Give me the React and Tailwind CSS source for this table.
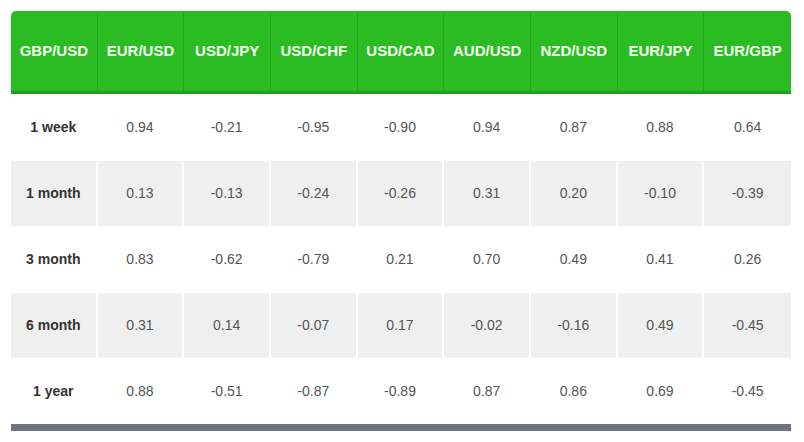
const pairs = ["GBP/USD", "EUR/USD", "USD/JPY", "USD/CHF", "USD/CAD", "AUD/USD", "NZD/USD", "EUR/JPY", "EUR/GBP"];

const rows = [
    { label: "1 week", values: ["0.94", "-0.21", "-0.95", "-0.90", "0.94", "0.87", "0.88", "0.64"] },
    { label: "1 month", values: ["0.13", "-0.13", "-0.24", "-0.26", "0.31", "0.20", "-0.10", "-0.39"] },
    { label: "3 month", values: ["0.83", "-0.62", "-0.79", "0.21", "0.70", "0.49", "0.41", "0.26"] },
    { label: "6 month", values: ["0.31", "0.14", "-0.07", "0.17", "-0.02", "-0.16", "0.49", "-0.45"] },
    { label: "1 year", values: ["0.88", "-0.51", "-0.87", "-0.89", "0.87", "0.86", "0.69", "-0.45"] },
];

const App = () => {
    return (
        <div className="w-[804px] h-[442px] bg-white pt-[11px] px-[11px] font-['Liberation_Sans',Arial,sans-serif]">
            <div className="w-[780px]">
                {/* Header */}
                <div className="grid grid-cols-9 h-[83px] bg-[#2bbc23] rounded-t-[5px] border-b-[3px] border-[#249d1e]">
                    {pairs.map((p, i) => (
                        <div
                            key={p}
                            className={`flex items-center justify-center text-[#f4fff2] font-bold text-[15px] pt-[1px] ${i < pairs.length - 1 ? "border-r border-[#25a51e]" : ""}`}
                        >
                            {p}
                        </div>
                    ))}
                </div>

                {/* Body */}
                {rows.map((row, r) => (
                    <div key={row.label} className="grid grid-cols-9 h-[66px]">
                        <div className={`flex items-center justify-center text-[14px] font-bold text-[#333] border-r-2 border-white ${r % 2 === 1 ? "bg-[#efefef] border-t" : "bg-white pt-[1px]"}`}>
                            {row.label}
                        </div>
                        {row.values.map((v, i) => (
                            <div
                                key={i}
                                className={`flex items-center justify-center text-[14px] text-[#555] ${i < row.values.length - 1 ? "border-r-2 border-white" : ""} ${r % 2 === 1 ? "bg-[#efefef] border-t border-white" : "bg-white pt-[1px]"}`}
                            >
                                {v}
                            </div>
                        ))}
                    </div>
                ))}

                <div className="h-[7px] bg-[#6f737e]"></div>
            </div>
        </div>
    );
};

export default App;
